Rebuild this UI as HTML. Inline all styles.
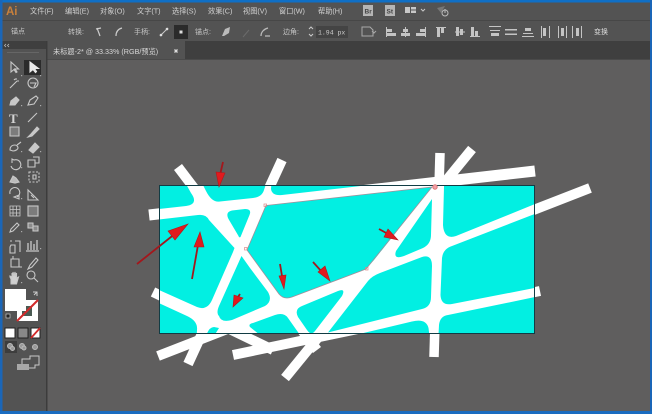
<!DOCTYPE html>
<html><head><meta charset="utf-8">
<style>
html,body{margin:0;padding:0;background:#5f5e5e;width:652px;height:414px;overflow:hidden}
svg{display:block;filter:blur(.35px)}
text{font-family:"Liberation Sans","Noto Sans CJK SC",sans-serif;fill:#d2d2d2}
.m{font-size:7.2px}
.o{font-size:7px;fill:#c4c4c4}
</style></head><body>
<svg width="652" height="414" viewBox="0 0 652 414" xmlns="http://www.w3.org/2000/svg">
<defs>
<clipPath id="art"><rect x="159" y="185" width="376" height="149"/></clipPath>
</defs>

<!-- base -->
<rect width="652" height="414" fill="#5f5e5e"/>
<!-- menu + options -->
<rect y="0" width="652" height="41" fill="#535353"/>
<rect y="20" width="652" height="1" fill="#474747"/>
<!-- tab strip -->
<rect y="41" width="652" height="19" fill="#3f3f3f"/>
<rect x="47" y="41" width="138" height="19" fill="#535353"/>
<rect y="59" width="652" height="1" fill="#4a4a4a"/>
<!-- toolbar -->
<rect x="0" y="41" width="46" height="373" fill="#535353"/>
<rect x="0" y="41" width="46" height="8" fill="#3f3f3f"/>
<rect x="46" y="41" width="1.500" height="373" fill="#3c3c3c"/>

<!-- menu -->
<text x="6" y="15" font-size="11.500" font-weight="bold" style="fill:#c8803c">Ai</text>
<text class="m" x="30" y="13.500">文件(F)</text>
<text class="m" x="65" y="13.500">编辑(E)</text>
<text class="m" x="100" y="13.500">对象(O)</text>
<text class="m" x="137" y="13.500">文字(T)</text>
<text class="m" x="172" y="13.500">选择(S)</text>
<text class="m" x="208" y="13.500">效果(C)</text>
<text class="m" x="243" y="13.500">视图(V)</text>
<text class="m" x="279" y="13.500">窗口(W)</text>
<text class="m" x="318" y="13.500">帮助(H)</text>
<rect x="363" y="5" width="10" height="11" fill="#b5b5b5"/><text x="364.500" y="13.500" font-size="6.500" font-weight="bold" style="fill:#444">Br</text>
<rect x="385" y="5" width="10" height="11" fill="#b5b5b5"/><text x="386.500" y="13.500" font-size="6.500" font-weight="bold" style="fill:#444">St</text>
<g fill="#c8c8c8"><rect x="405" y="7" width="5" height="6"/><rect x="411" y="7" width="5" height="2.500"/><rect x="411" y="10.500" width="5" height="2.500"/></g>
<path d="M421 9l2 2 2-2" stroke="#c8c8c8" fill="none"/>
<path d="M437 8l8 -2-4 7z" fill="#777"/><circle cx="445" cy="13" r="3" stroke="#bbb" fill="none"/><path d="M445 9v4" stroke="#bbb"/>

<!-- options -->
<text class="o" x="11" y="33.500">锚点</text>
<text class="o" x="68" y="34">转换:</text>
<path d="M97 28l3 8M96 29l5-1" stroke="#ccc" stroke-width="1.200" fill="none"/>
<path d="M116 36c0-4 2-7 6-8" stroke="#ccc" stroke-width="1.200" fill="none"/>
<text class="o" x="134" y="34">手柄:</text>
<path d="M160 36l8-8" stroke="#ccc"/><circle cx="161" cy="35" r="1.300" fill="#ddd"/><circle cx="167" cy="29" r="1.300" fill="#ddd"/>
<rect x="174" y="25" width="14" height="14" fill="#2b2b2b"/><rect x="179.500" y="30.500" width="3" height="3" fill="#ddd"/>
<text class="o" x="195" y="34">锚点:</text>
<path d="M222 36l3-7 5-2-1 6-5 3z" fill="#bbb"/>
<path d="M243 37l6-7" stroke="#6b6b6b"/>
<path d="M261 36c0-4 3-7 7-8M265 36h5" stroke="#bbb" stroke-width="1.300" fill="none"/>
<text class="o" x="283" y="34">边角:</text>
<path d="M309 29l2-2 2 2M309 34l2 2 2-2" stroke="#ccc" fill="none"/>
<rect x="316" y="26" width="32" height="12" fill="#444"/>
<text x="318" y="34.500" font-size="6.500" style="font-family:'Liberation Mono',monospace;fill:#ccc">1.94 px</text>
<path d="M362 27h8l3 3v6h-11z" stroke="#aaa" fill="none"/><path d="M372 31l2 2 2-2" stroke="#aaa" fill="none"/>
<g fill="#c4c4c4">
<rect x="386" y="27" width="1" height="10"/><rect x="387" y="29" width="5" height="3"/><rect x="387" y="33" width="9" height="3"/>
<rect x="405" y="27" width="1" height="10"/><rect x="403" y="29" width="5" height="3"/><rect x="401" y="33" width="9" height="3"/>
<rect x="425" y="27" width="1" height="10"/><rect x="420" y="29" width="5" height="3"/><rect x="416" y="33" width="9" height="3"/>
<rect x="436" y="27" width="10" height="1"/><rect x="437" y="28" width="3" height="9"/><rect x="441" y="28" width="3" height="5"/>
<rect x="455" y="31.500" width="10" height="1"/><rect x="456" y="27" width="3" height="9"/><rect x="460" y="29" width="3" height="6"/>
<rect x="470" y="36" width="10" height="1"/><rect x="471" y="27" width="3" height="9"/><rect x="475" y="31" width="3" height="5"/>
<rect x="489" y="26" width="12" height="1"/><rect x="490" y="30" width="10" height="1"/><rect x="491" y="33" width="8" height="3"/>
<rect x="505" y="29" width="12" height="1.500"/><rect x="505" y="33.500" width="12" height="1.500"/>
<rect x="522" y="36" width="12" height="1"/><rect x="523" y="33" width="10" height="1"/><rect x="525" y="28" width="6" height="3"/>
<rect x="541" y="26" width="1" height="12"/><rect x="543" y="28" width="3" height="8"/><rect x="549" y="26" width="1" height="12"/>
<rect x="558" y="26" width="1" height="12"/><rect x="561" y="28" width="3" height="8"/><rect x="566" y="26" width="1" height="12"/>
<rect x="572" y="26" width="1" height="12"/><rect x="576" y="28" width="3" height="8"/><rect x="581" y="26" width="1" height="12"/>
</g>
<text class="o" x="594" y="34" style="fill:#ddd">变换</text>

<!-- tab -->
<text x="53" y="54" font-size="7.200" style="fill:#d8d8d8">未标题-2* @ 33.33% (RGB/预览)</text>
<path d="M174.500 49.500l3 3M177.500 49.500l-3 3" stroke="#ddd" stroke-width="1.300"/>

<!-- toolbar handle -->
<path d="M6 44l-1.500 1.500L6 47M9 44l-1.500 1.500L9 47" stroke="#bbb" fill="none" stroke-width=".8"/>
<rect x="7" y="52" width="32" height="1" fill="#666"/>

<!-- tools -->
<rect x="24" y="60" width="17" height="15" fill="#2b2b2b"/>
<g stroke="#c8c8c8" stroke-width="1.100" fill="none">
<path d="M11 62v10l3-2.500 2 3 1-.6-2-3h3.500z"/>
<path d="M30 62v10l3-2.500 2.500 3 1-1-2-3h4z" fill="#e8e8e8" stroke="#e8e8e8"/>
<path d="M10 88l7-7M16 78v2M19 81h-2M14 79l1 1"/>
<circle cx="33" cy="83" r="5"/><path d="M30 83h6l-2 4"/>
<path d="M10 105l1-4 5-4 3 3-4 5z" fill="#c8c8c8"/>
<path d="M28 105l2-5 6-4 2 2-4 6z"/>
<path d="M28 122l9-9"/>
<path d="M10 136h9v-9h-9z" fill="#7c7c7c"/>
<path d="M28 137l3-3 6-7 2 2-7 7z" fill="#c8c8c8"/>
<path d="M10 150c0-4 3-5 5-5s3 2 3 3-2 3-5 3zM17 145l4-3"/>
<path d="M29 150l6-7 4 4-6 6z" fill="#c8c8c8"/>
<path d="M11 166a5 5 0 1 0 3-6l-2-1v4"/>
<path d="M28 160h7v7h-7zM33 157h6v6h-4"/>
<path d="M10 182l3-6 3 2 3 4-4 1z" fill="#bbb"/>
<path d="M29 172h10v10h-10z" stroke-dasharray="2 1.500"/><path d="M33 175h3v4h-3z"/>
<path d="M10 194a5 5 0 1 1 7 3M14 197l5 2v-4z"/>
<path d="M28 190v10h10zM31 195l3 3"/>
<path d="M10 206h10v10h-10zM13 206v10M16.500 206v10M10 209.500h10M10 213h10" stroke-width=".8"/>
<rect x="28" y="206" width="10" height="10" fill="#7c7c7c"/>
<path d="M10 232l1-3 6-6 2 2-6 6z"/>
<path d="M28 223h5v5h-5zM33 226h5v5h-5z" fill="#8a8a8a"/>
<path d="M10 241h2M11 245h4v8h-5v-6zM15 241h5v11"/>
<path d="M28 250v-7M31 250v-9M34 250v-6M37 250v-10M26 251h13" stroke-width="1.300"/>
<path d="M11 259h8v8h-8zM13 256v3M19 267h3"/>
<path d="M28 269l2-4 6-7 2 2-6 7z"/>
<path d="M11 284v-5l-1-2v-1l2 1v-4l1 3v-4l1 4 1-4 .5 4 1-3v5l2-1-2 7z" fill="#d0d0d0"/>
<circle cx="31" cy="275" r="4"/><path d="M34 278l4 4"/>
</g>
<g fill="#aaa"><rect x="21" y="75" width="1.200" height="1.200"/><rect x="40" y="75" width="1.200" height="1.200"/><rect x="21" y="105" width="1.200" height="1.200"/><rect x="40" y="105" width="1.200" height="1.200"/><rect x="21" y="151" width="1.200" height="1.200"/><rect x="40" y="151" width="1.200" height="1.200"/><rect x="21" y="167" width="1.200" height="1.200"/><rect x="21" y="198" width="1.200" height="1.200"/><rect x="21" y="231" width="1.200" height="1.200"/><rect x="40" y="248" width="1.200" height="1.200"/><rect x="21" y="282" width="1.200" height="1.200"/></g>
<text x="9" y="123" font-size="13" font-weight="bold" style="font-family:'Liberation Serif',serif;fill:#d4d4d4">T</text>

<!-- fill/stroke -->
<rect x="17" y="300" width="21" height="21" fill="#fff"/>
<path d="M22 306h10v10h-10z" fill="#4a5a52"/>
<path d="M17 321 L38 300" stroke="#d22a2a" stroke-width="2"/>
<rect x="5" y="289" width="21" height="22" fill="#fff"/>
<path d="M33 292h4v4M37 292l-3 3" stroke="#ccc" fill="none"/>
<rect x="6" y="314" width="4" height="4" fill="#222" stroke="#ddd" stroke-width=".6"/>
<rect x="5" y="328" width="10" height="10" fill="#fff" stroke="#222"/>
<rect x="18" y="328" width="10" height="10" fill="#888" stroke="#222"/>
<rect x="31" y="328" width="9" height="10" fill="#fff" stroke="#222"/>
<path d="M31 338l9-10" stroke="#d22a2a" stroke-width="1.800"/>
<rect x="5" y="341" width="12" height="12" fill="#3d3d3d"/>
<g stroke="#bbb" fill="#999"><circle cx="10" cy="346" r="2.500"/><circle cx="12.500" cy="348.500" r="2"/><circle cx="22" cy="346" r="2.500"/><circle cx="24" cy="348" r="2"/><circle cx="35" cy="347" r="2.500"/></g>
<path d="M22 359h8v-3h9v9h-4v3h-13z" fill="none" stroke="#c8c8c8"/><path d="M17 364h12v6h-12z" fill="#a8a8a8"/>

<!-- artwork: white strokes outside the rectangle -->
<g stroke="#fff" stroke-width="10" fill="none">
<path d="M178 167 L317 350"/>
<path d="M149 215 L535 171" stroke-width="11"/>
<path d="M282 160 L188 364"/>
<path d="M590 188 L158 356"/>
<path d="M153 292 L273 350"/>
<path d="M540 291 L233 355"/>
<path d="M440 153 L434 357" stroke-width="9.500"/>
<path d="M472 149 L285 378"/>
</g>
<rect x="159" y="185" width="376" height="149" fill="#fff"/>
<!-- rounded cyan cells -->
<g clip-path="url(#art)" fill="#02efe2">
<path d="M150 175 L181 175 L191 193 Q199 204 186 206 L150 210Z"/>
<path d="M198 175 L206 191 Q212 203 220 201.500 L253 198 Q262 197 264 190 L269 175Z"/>
<path d="M272 175 L271 189 Q272 196 282 195 L400 181.500 L400 175Z"/>
<path d="M228.500 219 Q225 212 232 210.500 L245 209 Q252 209 249.500 215 L240.500 237 Q239 238 238.500 236Z"/>
<path d="M150 220.500 L198 215 Q206 214 209 220 L234.500 248 L233 252 L212 300 Q207 311 197 307 L150 286Z"/>
<path d="M150 299 L187 316 Q198 321 197 330 L196 345 L150 345Z"/>
<path d="M206 336 Q209 327 214 327 L219 328 L214 336Z"/>
<path d="M241.500 256 L250 268 L268 292 Q273 301 265 306 L232 320 Q221 323 219 316 Q216 313 219 306Z"/>
<path d="M266 205.500 L432 187 L374 260 L366 269 L292 297 Q284 300 279 294 L247 250Z"/>
<path d="M432 199 L431 235 Q431 244 423 248 L404 256 Q393 260 396 251Z"/>
<path d="M444 187 L443 225 Q444 240 456 236 L545 200 L545 170 L444 180Z"/>
<path d="M442 258 Q443 249 452 246 L545 210 L545 286 L452 304 Q441 306 440.500 295Z"/>
<path d="M438 345 L439 325 Q440 316 448 315 L545 295 L545 345Z"/>
<path d="M328 332.500 L368 281 Q372 276 380 273 L422 257 Q432 254 432 266 L431 297 Q431 307 422 309 L326 333Z"/>
<path d="M355 335 L412 321.500 Q426 318 428.500 328 L430 340 L355 340Z"/>
<path d="M338 291 Q346 288 342 296 L315 331 Q311 336 307 330 L298 317 Q294 309 302 306Z"/>
<path d="M250 327 Q248 324 253 323 L275 315 Q284 312 288 318 L300 335 L260 335Z"/>
</g>
<path d="M159.500 185.500H534.500V333.500H159.500Z" fill="none" stroke="#123c44" stroke-width="1"/>

<!-- selected path -->
<path d="M266 205.500 L432 187 L366 269 L292 297 Q284 300 279 294 L247 250Z" fill="none" stroke="#a08f9a" stroke-width=".8"/>
<circle cx="435" cy="187" r="2.200" fill="#f2a0a8" stroke="#d77"/>
<g fill="none" stroke="#d88" stroke-width=".7"><rect x="244.500" y="247.500" width="2.500" height="2.500"/><rect x="365.500" y="267.500" width="2.500" height="2.500"/><rect x="264" y="204" width="2.500" height="2.500"/></g>

<!-- arrows -->
<g stroke="#a3171c" stroke-width="1.800" fill="none">
<path d="M137 264 L176 233"/>
<path d="M192 279 L198 245"/>
<path d="M223 162 L220 175"/>
<path d="M280 264 L282 276"/>
<path d="M313 262 L322 272"/>
<path d="M379 229 L388 234"/>
<path d="M240 294 L236 300"/>
</g>
<g fill="#e01a1e" stroke="#b3171b" stroke-width=".6">
<path d="M188 224 L168 231 L175 240Z"/>
<path d="M200 232 L194 247 L204 247Z"/>
<path d="M219 187 L216 172 L225 173Z"/>
<path d="M284 289 L279 276 L286 275Z"/>
<path d="M330 281 L318 272 L325 266Z"/>
<path d="M398 240 L384 237 L388 229Z"/>
<path d="M233 307 L234 295 L243 298Z"/>
</g>

<!-- window border -->
<rect x="0" y="0" width="652" height="2.500" fill="#0f6fc6"/>
<rect x="0" y="0" width="2.500" height="414" fill="#1a66b8"/>
<rect x="650" y="0" width="2" height="414" fill="#1a66b8"/>
<rect x="0" y="411" width="652" height="3" fill="#1a6cc0"/>
</svg>
</body></html>
